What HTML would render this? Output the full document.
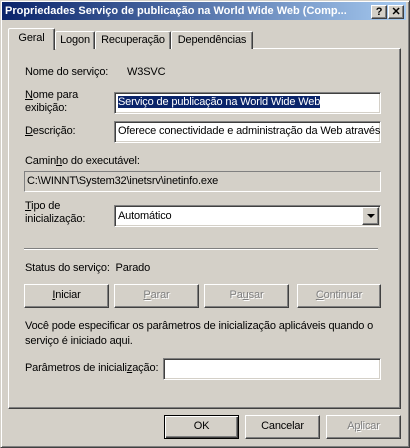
<!DOCTYPE html>
<html><head><meta charset="utf-8"><style>
*{margin:0;padding:0;box-sizing:border-box}
body{width:410px;height:448px;background:#d4d0c8;font-family:"Liberation Sans",sans-serif;font-size:11px;letter-spacing:-0.15px;color:#000;position:relative;overflow:hidden}
.a{position:absolute;white-space:nowrap}
.win{position:absolute;left:0;top:0;width:410px;height:448px;border:1px solid;border-color:#d4d0c8 #404040 #404040 #d4d0c8;box-shadow:inset 1px 1px #fff,inset -1px -1px #808080}
.title{position:absolute;left:2px;top:2px;width:404px;height:18px;background:linear-gradient(to right,#0a246a,#a6caf0);color:#fff;font-weight:bold;font-size:11px;letter-spacing:0;line-height:18px;padding-left:3px}
.tb{position:absolute;top:5px;width:16px;height:14px;background:#d4d0c8;border:1px solid;border-color:#fff #404040 #404040 #fff;box-shadow:inset -1px -1px #808080;font-weight:bold;font-size:11px;line-height:12px;text-align:center;color:#000}
.raised{position:absolute;border:1px solid;border-color:#fff #404040 #404040 #fff;box-shadow:inset -1px -1px #808080}
.sunk{position:absolute;border:1px solid;border-color:#808080 #fff #fff #808080;box-shadow:inset 1px 1px #404040,inset -1px -1px #d4d0c8;background:#fff;padding:3px 0 0 3px;white-space:nowrap;overflow:hidden}
.tab{position:absolute;border:1px solid;border-bottom:none;border-color:#fff #404040 #404040 #fff;box-shadow:inset -1px 0 #808080;border-radius:2px 2px 0 0;background:#d4d0c8;text-align:center;line-height:16px}
.btn{position:absolute;height:24px;border:1px solid;border-color:#fff #404040 #404040 #fff;box-shadow:inset -1px -1px #808080;text-align:center;line-height:21px}
.dis{color:#808080;text-shadow:1px 1px #fff}
u{text-decoration:underline}
</style></head><body>
<div class="win"></div>
<div class="title">Propriedades Serviço de publicação na World Wide Web (Comp...</div>
<div class="tb" style="left:371px">?</div>
<div class="tb" style="left:388px">✕</div>

<div class="raised" style="left:8px;top:48px;width:393px;height:361px"></div>
<div class="tab" style="left:55px;top:31px;width:40px;height:18px">Logon</div>
<div class="tab" style="left:95px;top:31px;width:76px;height:18px">Recuperação</div>
<div class="tab" style="left:171px;top:31px;width:82px;height:18px">Dependências</div>
<div class="tab" style="left:8px;top:28px;width:47px;height:22px;line-height:18px;z-index:2">Geral</div>

<div class="a" style="left:25px;top:66px">Nome do serviço:</div>
<div class="a" style="left:127px;top:66px">W3SVC</div>
<div class="a" style="left:25px;top:89px;line-height:13px"><u>N</u>ome para<br>exibição:</div>
<div class="sunk" style="left:114px;top:92px;width:267px;height:22px"><span style="background:#0a246a;color:#fff">Serviço de publicação na World Wide Web</span></div>
<div class="a" style="left:25px;top:125px"><u>D</u>escrição:</div>
<div class="sunk" style="left:114px;top:121px;width:267px;height:22px">Oferece conectividade e administração da Web através</div>
<div class="a" style="left:25px;top:155px">Camin<u>h</u>o do executável:</div>
<div class="a" style="left:24px;top:171px;width:357px;height:21px;border:1px solid;border-color:#808080 #fff #fff #808080;padding:3px 0 0 2px">C:\WINNT\System32\inetsrv\inetinfo.exe</div>
<div class="a" style="left:25px;top:200px;line-height:13px"><u>T</u>ipo de<br>inicialização:</div>
<div class="sunk" style="left:114px;top:205px;width:267px;height:22px;padding-top:4px">Automático</div>
<div class="raised" style="left:362px;top:207px;width:17px;height:18px;background:#d4d0c8"><div style="position:absolute;left:4px;top:6px;width:0;height:0;border-left:4px solid transparent;border-right:4px solid transparent;border-top:4px solid #000"></div></div>
<div class="a" style="left:24px;top:248px;width:354px;height:2px;border-top:1px solid #808080;border-bottom:1px solid #fff"></div>
<div class="a" style="left:25px;top:262px">Status do serviço:&nbsp; Parado</div>
<div class="btn" style="left:24px;top:284px;width:85px"><u>I</u>niciar</div>
<div class="btn dis" style="left:114px;top:284px;width:85px"><u>P</u>arar</div>
<div class="btn dis" style="left:204px;top:284px;width:85px">Pa<u>u</u>sar</div>
<div class="btn dis" style="left:297px;top:284px;width:84px"><u>C</u>ontinuar</div>
<div class="a" style="left:25px;top:319px;line-height:15px">Você pode especificar os parâmetros de inicialização aplicáveis quando o<br>serviço é iniciado aqui.</div>
<div class="a" style="left:25px;top:362px">Parâmetros de iniciali<u>z</u>ação:</div>
<div class="sunk" style="left:163px;top:358px;width:218px;height:22px"></div>
<div class="btn" style="left:164px;top:415px;width:75px;border:1px solid #000;box-shadow:inset 1px 1px #fff,inset -1px -1px #404040,inset -2px -2px #808080">OK</div>
<div class="btn" style="left:245px;top:415px;width:75px">Cancelar</div>
<div class="btn dis" style="left:326px;top:415px;width:75px">A<u>p</u>licar</div>
</body></html>
